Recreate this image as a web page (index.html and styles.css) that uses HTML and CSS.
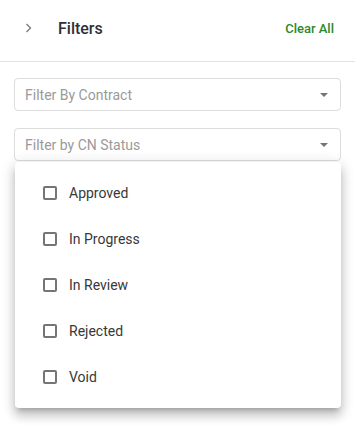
FILE: index.html
```html
<!DOCTYPE html>
<html>
<head>
<meta charset="utf-8">
<link rel="stylesheet" href="styles.css">
</head>
<body>
<div class="panel">
  <header class="header">
    <svg class="chev" width="8" height="10" viewBox="0 0 8 10"><path d="M2.5 1 L6.5 5 L2.5 9" fill="none" stroke="#7a7a7a" stroke-width="1.3"/></svg>
    <h1 class="title">Filters</h1>
    <a class="clear">Clear All</a>
  </header>
  <div class="body">
    <div class="select">
      <span class="ph">Filter By Contract</span>
      <span class="caret"></span>
    </div>
    <div class="dropwrap">
      <div class="select">
        <span class="ph">Filter by CN Status</span>
        <span class="caret"></span>
      </div>
      <ul class="menu">
        <li class="opt"><span class="box"></span><span>Approved</span></li>
        <li class="opt"><span class="box"></span><span>In Progress</span></li>
        <li class="opt"><span class="box"></span><span>In Review</span></li>
        <li class="opt"><span class="box"></span><span>Rejected</span></li>
        <li class="opt"><span class="box"></span><span>Void</span></li>
      </ul>
    </div>
  </div>
</div>
</body>
</html>
```
FILE: styles.css
```css
* { box-sizing: border-box; }
html, body { margin: 0; padding: 0; background: #fff; }
body { font-family: Roboto, "Liberation Sans", sans-serif; width: 355px; height: 448px; overflow: hidden; }
.header {
  height: 62px;
  display: flex;
  align-items: center;
  padding: 0 21px 5px 24px;
  border-bottom: 1px solid #e2e2e2;
}
.chev { margin-right: 26px; margin-top: 0; }
.title { margin: 0; font-size: 16px; font-weight: 500; color: #2f2f36; flex: 1; }
.clear { font-size: 13px; font-weight: 500; color: #2b8a2b; }
.body { padding: 16px 14px 0 14px; display: flex; flex-direction: column; gap: 17px; }
.select {
  height: 33px;
  border: 1px solid #dcdcdc;
  border-radius: 4px;
  display: flex;
  align-items: center;
  padding: 0 12px 0 10px;
  background: #fff;
}
.ph { flex: 1; font-size: 14px; color: #9a9a9a; }
.caret {
  width: 0; height: 0;
  border-left: 4.5px solid transparent;
  border-right: 4.5px solid transparent;
  border-top: 4.5px solid #757575;
  margin-top: 1px;
}
.dropwrap { position: relative; }
.menu {
  position: absolute;
  left: 1px; right: 0; top: 34px;
  margin: 0;
  padding: 8px 0;
  list-style: none;
  background: #fff;
  border-radius: 4px;
  box-shadow: 0 5px 5px -3px rgba(0,0,0,0.2), 0 8px 10px 1px rgba(0,0,0,0.14), 0 3px 14px 2px rgba(0,0,0,0.12);
}
.opt {
  height: 46px;
  display: flex;
  align-items: center;
  padding-left: 28px;
  gap: 12px;
  font-size: 14px;
  color: #383838;
}
.box {
  width: 14px; height: 14px;
  border: 2px solid #757575;
  border-radius: 2px;
}
```
